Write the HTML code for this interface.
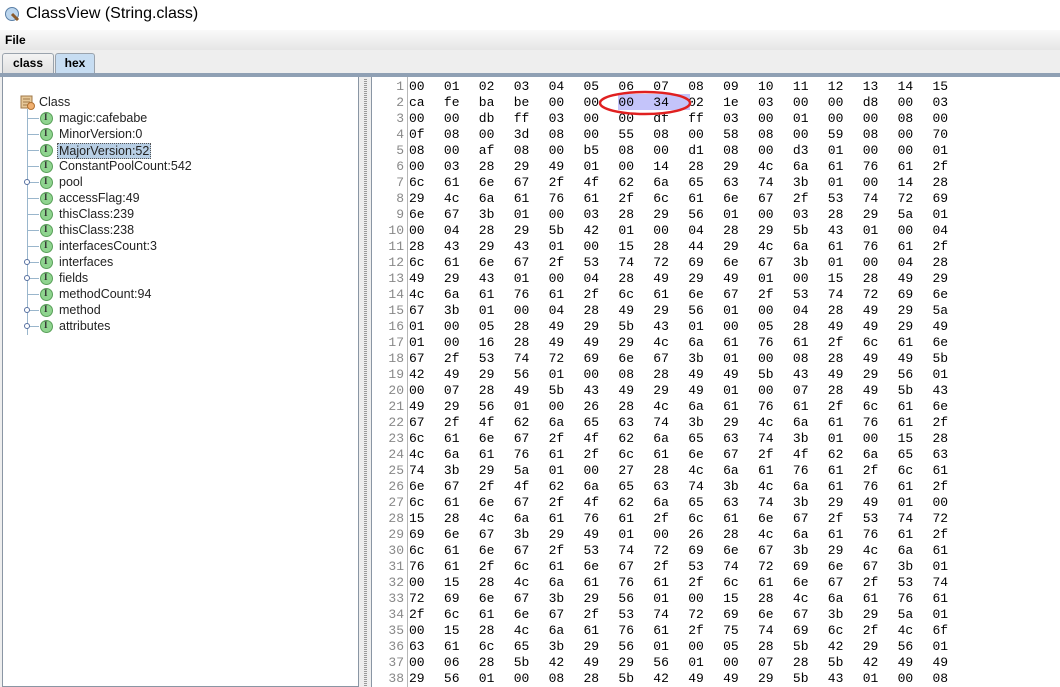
<!DOCTYPE html>
<html><head><style>
*{margin:0;padding:0;box-sizing:border-box}
body{width:1060px;height:687px;overflow:hidden;background:#eeeeee;font-family:"Liberation Sans",sans-serif;position:relative}
.title{position:absolute;left:0;top:0;width:1060px;height:30px;background:#fff;font-size:16px;color:#000}
.title span{position:absolute;left:26px;top:5px}
.menu{position:absolute;left:0;top:30px;width:1060px;height:20px;background:linear-gradient(#fafafa,#e6e6e6);font-size:12px;font-weight:bold}
.menu span{position:absolute;left:5px;top:3px}
.tab{position:absolute;top:53px;height:21px;border:1px solid #9aa3ad;border-bottom:none;font-size:12px;font-weight:bold;text-align:center;line-height:19px;border-radius:3px 3px 0 0}
.bar{position:absolute;left:0;top:73px;width:1060px;height:4px;background:#8fa0b4}
.left{position:absolute;left:2px;top:77px;width:357px;height:610px;background:#fff;border:1px solid #8a96a4;border-top:none}
.split{position:absolute;left:359px;top:77px;width:12px;height:610px;background:#eee}
.split i{position:absolute;left:5px;top:2px;width:3px;height:608px;background:repeating-linear-gradient(#999 0 1px,#eee 1px 2px)}
.right{position:absolute;left:371px;top:77px;width:689px;height:610px;background:#fff;border-left:1px solid #8a96a4}
.ln{position:absolute;left:0;width:32px;text-align:right;color:#888;font:13px "Liberation Mono",monospace}
.div{position:absolute;left:35px;top:0;width:1px;height:610px;background:#b8b8b8}
.hx{position:absolute;font:13px "Liberation Mono",monospace;color:#000}
.tree{position:absolute;font-size:12.5px;color:#222}
.ic{position:absolute;width:13px;height:13px;border-radius:50%;background:#8fd48f;border:1px solid #5aa05a}
.ic:after{content:"I";position:absolute;left:3px;top:-1px;font:bold 9px serif;color:#333}
.hl{position:absolute;height:1px;background:#9ab6cc}
.vl{position:absolute;width:1px;background:#9ab6cc}
.kn{position:absolute;width:6px;height:6px;border-radius:50%;border:1.5px solid #5670a0;background:#fff}
</style></head><body>
<div class="title"><svg style="position:absolute;left:4px;top:6px" width="16" height="16"><circle cx="8" cy="8" r="6.5" fill="#bcd6ee" stroke="#5a7fa6"/><path d="M8 8l6 6" stroke="#8a5a2a" stroke-width="3"/></svg><span>ClassView (String.class)</span></div>
<div class="menu"><span>File</span></div>
<div class="tab" style="left:2px;width:52px;background:linear-gradient(#f4f4f4,#e0e0e0)">class</div>
<div class="tab" style="left:55px;width:40px;background:#c7ddf2">hex</div>
<div class="bar"></div>
<div class="left">
<svg style="position:absolute;left:17px;top:18px" width="15" height="15"><rect x="1" y="1" width="11" height="12" fill="#e6c898" stroke="#a07848"/><path d="M3 4h7M3 7h7M3 10h5" stroke="#a07848"/><circle cx="11" cy="11" r="3.5" fill="#f0b070" stroke="#b07030"/></svg>
<div class="tree" style="left:36px;top:18px">Class</div>
<div class="vl" style="left:24px;top:32px;height:226px"></div>
<div id="t"></div>
</div>
<div class="split"><i></i></div>
<div class="right"><div class="div"></div>
<div style="position:absolute;left:246px;top:17px;width:72px;height:16px;background:#c4c4fa"></div>
<div id="h"></div>
<svg style="position:absolute;left:226px;top:13px" width="95" height="26"><ellipse cx="47" cy="13" rx="45" ry="11" fill="none" stroke="#e02020" stroke-width="2.5"/></svg>
</div>
<script>
var items=[["magic:cafebabe",0],["MinorVersion:0",0],["MajorVersion:52",0],["ConstantPoolCount:542",0],["pool",1],["accessFlag:49",0],["thisClass:239",0],["thisClass:238",0],["interfacesCount:3",0],["interfaces",1],["fields",1],["methodCount:94",0],["method",1],["attributes",1]];
var s="";
items.forEach(function(it,i){var y=34+i*16;
s+='<div class="hl" style="left:24px;top:'+(y+7)+'px;width:12px"></div>';
if(it[1])s+='<div class="kn" style="left:21px;top:'+(y+4)+'px"></div>';
s+='<div class="ic" style="left:37px;top:'+(y+1)+'px"></div>';
var sel=i==2?'background:#b8cfe5;border:1px dotted #555;padding:0 1px;left:54px;':'left:56px;';
s+='<div class="tree" style="'+sel+'top:'+y+'px">'+it[0]+'</div>';});
document.getElementById('t').innerHTML=s;
var rows=["00 01 02 03 04 05 06 07 08 09 10 11 12 13 14 15","ca fe ba be 00 00 00 34 02 1e 03 00 00 d8 00 03","00 00 db ff 03 00 00 df ff 03 00 01 00 00 08 00","0f 08 00 3d 08 00 55 08 00 58 08 00 59 08 00 70","08 00 af 08 00 b5 08 00 d1 08 00 d3 01 00 00 01","00 03 28 29 49 01 00 14 28 29 4c 6a 61 76 61 2f","6c 61 6e 67 2f 4f 62 6a 65 63 74 3b 01 00 14 28","29 4c 6a 61 76 61 2f 6c 61 6e 67 2f 53 74 72 69","6e 67 3b 01 00 03 28 29 56 01 00 03 28 29 5a 01","00 04 28 29 5b 42 01 00 04 28 29 5b 43 01 00 04","28 43 29 43 01 00 15 28 44 29 4c 6a 61 76 61 2f","6c 61 6e 67 2f 53 74 72 69 6e 67 3b 01 00 04 28","49 29 43 01 00 04 28 49 29 49 01 00 15 28 49 29","4c 6a 61 76 61 2f 6c 61 6e 67 2f 53 74 72 69 6e","67 3b 01 00 04 28 49 29 56 01 00 04 28 49 29 5a","01 00 05 28 49 29 5b 43 01 00 05 28 49 49 29 49","01 00 16 28 49 49 29 4c 6a 61 76 61 2f 6c 61 6e","67 2f 53 74 72 69 6e 67 3b 01 00 08 28 49 49 5b","42 49 29 56 01 00 08 28 49 49 5b 43 49 29 56 01","00 07 28 49 5b 43 49 29 49 01 00 07 28 49 5b 43","49 29 56 01 00 26 28 4c 6a 61 76 61 2f 6c 61 6e","67 2f 4f 62 6a 65 63 74 3b 29 4c 6a 61 76 61 2f","6c 61 6e 67 2f 4f 62 6a 65 63 74 3b 01 00 15 28","4c 6a 61 76 61 2f 6c 61 6e 67 2f 4f 62 6a 65 63","74 3b 29 5a 01 00 27 28 4c 6a 61 76 61 2f 6c 61","6e 67 2f 4f 62 6a 65 63 74 3b 4c 6a 61 76 61 2f","6c 61 6e 67 2f 4f 62 6a 65 63 74 3b 29 49 01 00","15 28 4c 6a 61 76 61 2f 6c 61 6e 67 2f 53 74 72","69 6e 67 3b 29 49 01 00 26 28 4c 6a 61 76 61 2f","6c 61 6e 67 2f 53 74 72 69 6e 67 3b 29 4c 6a 61","76 61 2f 6c 61 6e 67 2f 53 74 72 69 6e 67 3b 01","00 15 28 4c 6a 61 76 61 2f 6c 61 6e 67 2f 53 74","72 69 6e 67 3b 29 56 01 00 15 28 4c 6a 61 76 61","2f 6c 61 6e 67 2f 53 74 72 69 6e 67 3b 29 5a 01","00 15 28 4c 6a 61 76 61 2f 75 74 69 6c 2f 4c 6f","63 61 6c 65 3b 29 56 01 00 05 28 5b 42 29 56 01","00 06 28 5b 42 49 29 56 01 00 07 28 5b 42 49 49","29 56 01 00 08 28 5b 42 49 49 29 5b 43 01 00 08"];
var h="";
rows.forEach(function(r,i){var y=2+i*16;
h+='<div class="ln" style="top:'+y+'px">'+(i+1)+'</div>';
r.split(" ").forEach(function(b,j){h+='<div class="hx" style="left:'+(37+j*34.9)+'px;top:'+y+'px">'+b+'</div>';});});
document.getElementById('h').innerHTML=h;
</script>
</body></html>
